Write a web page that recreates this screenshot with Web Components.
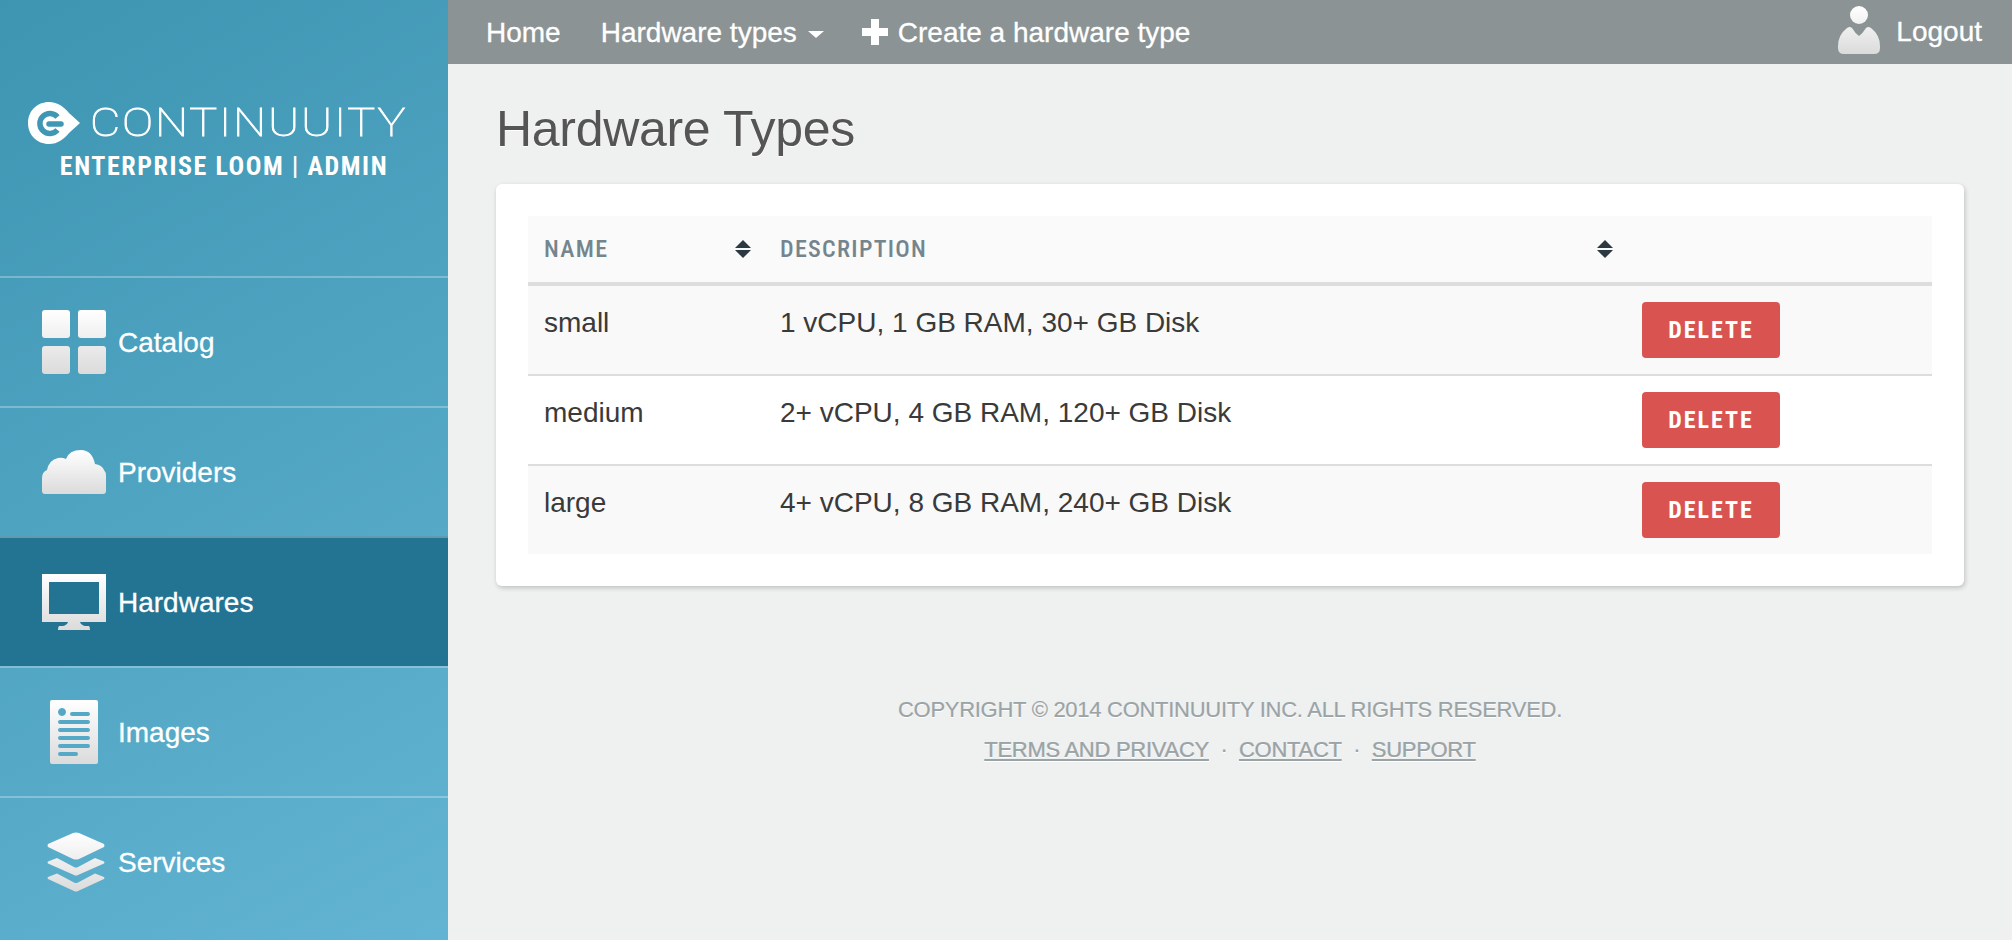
<!DOCTYPE html>
<html>
<head>
<meta charset="utf-8">
<title>Hardware Types</title>
<style>
html, body { margin: 0; height: 100%; }
body {
    height: 940px;
    overflow: hidden;
    font-family: "Liberation Sans", Arial, sans-serif;
    background: #eff1f0;
}
</style>
</head>
<body>
<app-shell>
    <side-bar slot="side">
        <side-item icon="catalog" label="Catalog"></side-item>
        <side-item icon="cloud" label="Providers"></side-item>
        <side-item icon="monitor" label="Hardwares" active></side-item>
        <side-item icon="doc" label="Images"></side-item>
        <side-item icon="layers" label="Services"></side-item>
    </side-bar>
    <top-bar slot="top"></top-bar>
    <page-title>Hardware Types</page-title>
    <hardware-table></hardware-table>
    <site-footer></site-footer>
</app-shell>

<script>
const NARROW = `"Roboto Condensed", "Liberation Sans Narrow", "Liberation Sans", sans-serif`

const ICONS = {
    catalog: { w: 64, h: 64, body: `
        <rect x="0" y="0" width="28" height="28" rx="3"/>
        <rect x="36" y="0" width="28" height="28" rx="3"/>
        <rect x="0" y="36" width="28" height="28" rx="3"/>
        <rect x="36" y="36" width="28" height="28" rx="3"/>` },
    cloud: { w: 64, h: 44, body: `
        <path d="M3 44Q0 44 0 41V28Q0 22 5 20Q7 10 16 8Q20 7 24 9Q27 0 39 0Q50 0 53 14Q60 15 62 20Q64 22 64 26V41Q64 44 61 44Z"/>` },
    monitor: { w: 64, h: 56, body: `
        <path fill-rule="evenodd" d="M0 0H64V48H0ZM7 8V40H57V8Z"/>
        <path d="M26 48H38Q39 51 43 52H47Q48 53 48 56H16Q16 53 17 52H21Q25 51 26 48Z"/>` },
    doc: { w: 48, h: 64, body: `
        <path fill-rule="evenodd" d="M2 0H46Q48 0 48 2V62Q48 64 46 64H2Q0 64 0 62V2Q0 0 2 0Z
            M12 8a4 4 0 1 0 .01 0Z
            M22 12h16a2 2 0 0 1 0 4h-16a2 2 0 0 1 0-4Z
            M10 20h28a2 2 0 0 1 0 4h-28a2 2 0 0 1 0-4Z
            M10 28h28a2 2 0 0 1 0 4h-28a2 2 0 0 1 0-4Z
            M10 36h28a2 2 0 0 1 0 4h-28a2 2 0 0 1 0-4Z
            M10 44h28a2 2 0 0 1 0 4h-28a2 2 0 0 1 0-4Z
            M10 52h16a2 2 0 0 1 0 4h-16a2 2 0 0 1 0-4Z"/>` },
    layers: { w: 58, h: 60, body: `
        <path d="M26 1Q29 0 32 1L57 12Q58 13.500 57 15L32 27Q29 28 26 27L1 15Q0 13.500 1 12Z"/>
        <path d="M10 26L27 35Q29 36 31 35L48 26L57 29.500Q58 30.500 57 31.500L31 43Q29 44 27 43L1 31.500Q0 30.500 1 29.500Z"/>
        <path d="M10 41.500L27 50.500Q29 51.500 31 50.500L48 41.500L57 45Q58 46 57 47L31 59Q29 60 27 59L1 47Q0 46 1 45Z"/>` },
    user: { w: 42, h: 48, body: `
        <circle cx="21" cy="9" r="9"/>
        <path d="M21 30Q17 27 14 22Q12 20 9 22Q0 29 0 40V42Q0 48 6 48H36Q42 48 42 42V40Q42 29 33 22Q30 20 28 22Q25 27 21 30Z"/>` }
}

// gradient white icon, shared by the sidebar and the logout link
class GlossIcon extends HTMLElement {
    connectedCallback() {
        const icon = ICONS[this.getAttribute("name")]
        this.attachShadow({mode: "open"}).innerHTML = `
            <style>
            :host { display: block; width: ${icon.w}px; height: ${icon.h}px; }
            svg { display: block; }
            </style>
            <svg width="${icon.w}" height="${icon.h}" viewBox="0 0 ${icon.w} ${icon.h}">
                <defs>
                    <linearGradient id="g" gradientUnits="userSpaceOnUse" x1="0" y1="0" x2="0" y2="${icon.h}">
                        <stop offset="0" stop-color="#ffffff"/>
                        <stop offset="1" stop-color="#dbdbdb"/>
                    </linearGradient>
                </defs>
                <g fill="url(#g)">${icon.body}</g>
            </svg>
        `
    }
}
customElements.define("gloss-icon", GlossIcon)

class AppShell extends HTMLElement {
    constructor() {
        super()
        this.attachShadow({mode: "open"}).innerHTML = `
            <style>
            :host {
                display: grid;
                grid-template-columns: 448px 1fr;
                grid-template-rows: 64px 1fr;
                height: 940px;
            }
            .side { grid-row: 1 / 3; }
            main { padding: 0 48px 0 48px; }
            </style>
            <div class="side"><slot name="side"></slot></div>
            <div><slot name="top"></slot></div>
            <main><slot></slot></main>
        `
    }
}
customElements.define("app-shell", AppShell)

class SideBar extends HTMLElement {
    constructor() {
        super()
        this.attachShadow({mode: "open"}).innerHTML = `
            <style>
            :host {
                display: block;
                height: 940px;
                overflow: hidden;
                background: linear-gradient(150deg, #3d95b2 0%, #62b4d2 100%);
                color: #fff;
            }
            .brand {
                height: 276px;
                box-sizing: border-box;
                padding-top: 102px;
            }
            .logo {
                display: flex;
                align-items: center;
                height: 42px;
                padding-left: 28px;
                gap: 10px;
            }
            .word {
                display: inline-block;
                font: 100 39px/42px Roboto, sans-serif;
                letter-spacing: 1.5px;
                color: #fff;
                -webkit-text-stroke: .8px #fff;
                transform: scaleX(1.2);
                transform-origin: left center;
            }
            .sub {
                margin-top: 6px;
                text-align: center;
                font: 700 26px/32px ${NARROW};
                letter-spacing: 1.55px;
            }
            </style>
            <div class="brand">
                <div class="logo">
                    <svg width="52" height="42" viewBox="0 0 52 42">
                        <path fill="#fff" d="M21 0C30 0 36 5 41 11L52 21L41 31C36 37 30 42 21 42C9 42 0 33 0 21C0 9 9 0 21 0Z"/>
                        <g fill="none" stroke="#3f97b4" stroke-width="5.500">
                            <path d="M29.500 15A10 10 0 1 0 29.500 28"/>
                            <path stroke-linecap="round" d="M21 22H33"/>
                        </g>
                    </svg>
                    <span class="word">CONTINUUITY</span>
                </div>
                <div class="sub">ENTERPRISE LOOM | ADMIN</div>
            </div>
            <slot></slot>
        `
    }
}
customElements.define("side-bar", SideBar)

class SideItem extends HTMLElement {
    connectedCallback() {
        this.attachShadow({mode: "open"}).innerHTML = `
            <style>
            :host {
                display: flex;
                align-items: center;
                height: 128px;
                border-top: 2px solid rgba(255, 255, 255, .28);
                font-size: 28px;
                color: #fff;
                -webkit-text-stroke: .3px #fff;
            }
            :host([active]) { background: #227492; }
            .ico {
                width: 64px;
                box-sizing: border-box;
                margin: 0 12px 0 42px;
                display: flex;
                justify-content: center;
            }
            :host([icon="layers"]) .ico { padding-left: 4px; }
            span { padding-top: 2px; }
            </style>
            <div class="ico"><gloss-icon name="${this.getAttribute("icon")}"></gloss-icon></div>
            <span>${this.getAttribute("label")}</span>
        `
    }
}
customElements.define("side-item", SideItem)

class TopBar extends HTMLElement {
    constructor() {
        super()
        this.attachShadow({mode: "open"}).innerHTML = `
            <style>
            :host {
                display: flex;
                align-items: center;
                height: 64px;
                padding: 0 30px 0 38px;
                background: #8b9394;
                color: #fff;
                font-size: 28px;
                -webkit-text-stroke: .3px #fff;
            }
            a { color: inherit; text-decoration: none; display: flex; align-items: center; padding-top: 1px; }
            .home { margin-right: 40px; }
            .types { margin-right: 38px; }
            .caret {
                width: 0; height: 0;
                margin-left: 11px;
                margin-top: 3px;
                border-left: 8px solid transparent;
                border-right: 8px solid transparent;
                border-top: 7px solid #fff;
            }
            .plus { margin-right: 10px; margin-top: -1px; }
            .logout { margin-left: auto; padding-top: 0; }
            .logout gloss-icon { margin-right: 16px; margin-top: -4px; }
            </style>
            <a class="home">Home</a>
            <a class="types">Hardware types<span class="caret"></span></a>
            <a>
                <svg class="plus" width="26" height="26" viewBox="0 0 26 26"><path fill="#fff" d="M9 0H17V9H26V17H17V26H9V17H0V9H9Z"/></svg>
                Create a hardware type
            </a>
            <a class="logout"><gloss-icon name="user"></gloss-icon>Logout</a>
        `
    }
}
customElements.define("top-bar", TopBar)

class PageTitle extends HTMLElement {
    constructor() {
        super()
        this.attachShadow({mode: "open"}).innerHTML = `
            <style>
            :host {
                display: block;
                height: 120px;
                box-sizing: border-box;
                padding-top: 29px;
                font-size: 50px;
                letter-spacing: -.3px;
                line-height: 72px;
                color: #555;
                text-shadow: 0 1px 0 #fff;
            }
            </style>
            <slot></slot>
        `
    }
}
customElements.define("page-title", PageTitle)

class DeleteButton extends HTMLElement {
    constructor() {
        super()
        this.attachShadow({mode: "open"}).innerHTML = `
            <style>
            :host {
                display: flex;
                align-items: center;
                justify-content: center;
                width: 138px;
                height: 56px;
                background: #d95350;
                border-radius: 4px;
                color: #fff;
                font: 700 24px/1 ${NARROW};
                letter-spacing: 2px;
            }
            </style>
            DELETE
        `
    }
}
customElements.define("delete-button", DeleteButton)

class SortArrows extends HTMLElement {
    constructor() {
        super()
        this.attachShadow({mode: "open"}).innerHTML = `
            <style>
            :host { display: block; width: 16px; height: 18px; }
            svg { display: block; }
            </style>
            <svg width="16" height="18" viewBox="0 0 16 18">
                <path fill="#2b3a42" d="M8 0L16 8H0ZM0 10H16L8 18Z"/>
            </svg>
        `
    }
}
customElements.define("sort-arrows", SortArrows)

class HardwareTable extends HTMLElement {
    constructor() {
        super()
        this._data = [
            { name: "small", description: "1 vCPU, 1 GB RAM, 30+ GB Disk" },
            { name: "medium", description: "2+ vCPU, 4 GB RAM, 120+ GB Disk" },
            { name: "large", description: "4+ vCPU, 8 GB RAM, 240+ GB Disk" }
        ]
        this.attachShadow({mode: "open"}).innerHTML = `
            <style>
            :host {
                display: block;
                padding: 32px;
                background: #fff;
                border-radius: 6px;
                box-shadow: 1px 2px 5px rgba(0, 0, 0, .2);
            }
            table {
                width: 100%;
                border-collapse: collapse;
                table-layout: fixed;
                font-size: 28px;
                color: #3a3a3a;
            }
            th {
                height: 66px;
                padding: 0 16px;
                background: #fafafa;
                border-bottom: 4px solid #ddd;
                text-align: left;
                font: 500 24px/1 ${NARROW};
                letter-spacing: 1.3px;
                color: #75858d;
            }
            th div { display: flex; align-items: center; justify-content: space-between; }
            th sort-arrows { margin-right: -3px; }
            td {
                height: 88px;
                box-sizing: border-box;
                padding: 17px 16px 15px;
                line-height: 40px;
                vertical-align: top;
                border-bottom: 2px solid #ddd;
            }
            td:last-child { padding-top: 16px; padding-bottom: 16px; }
            tr:last-child td { border-bottom: 0; }
            tbody tr:nth-child(odd) td { background: #f9f9f9; }
            </style>
            <table>
                <colgroup>
                    <col style="width:236px"><col style="width:862px"><col>
                </colgroup>
                <thead>
                    <tr>
                        <th><div>NAME<sort-arrows></sort-arrows></div></th>
                        <th><div>DESCRIPTION<sort-arrows></sort-arrows></div></th>
                        <th></th>
                    </tr>
                </thead>
                <tbody>
                    ${this._data.map(item => `
                        <tr>
                            <td>${item.name}</td>
                            <td>${item.description}</td>
                            <td><delete-button></delete-button></td>
                        </tr>
                    `).join("")}
                </tbody>
            </table>
        `
    }
}
customElements.define("hardware-table", HardwareTable)

class SiteFooter extends HTMLElement {
    constructor() {
        super()
        this.attachShadow({mode: "open"}).innerHTML = `
            <style>
            :host {
                display: block;
                margin-top: 104px;
                text-align: center;
                font-size: 22px;
                letter-spacing: -.28px;
                line-height: 40px;
                color: #9aa3a6;
                -webkit-text-stroke: .2px #9aa3a6;
                text-shadow: 0 1px 0 #fff;
            }
            a { color: inherit; text-decoration: underline; }
            .dot { margin: 0 11.500px; }
            </style>
            <div>COPYRIGHT © 2014 CONTINUUITY INC. ALL RIGHTS RESERVED.</div>
            <div><a>TERMS AND PRIVACY</a><span class="dot">·</span><a>CONTACT</a><span class="dot">·</span><a>SUPPORT</a></div>
        `
    }
}
customElements.define("site-footer", SiteFooter)
</script>
</body>
</html>
